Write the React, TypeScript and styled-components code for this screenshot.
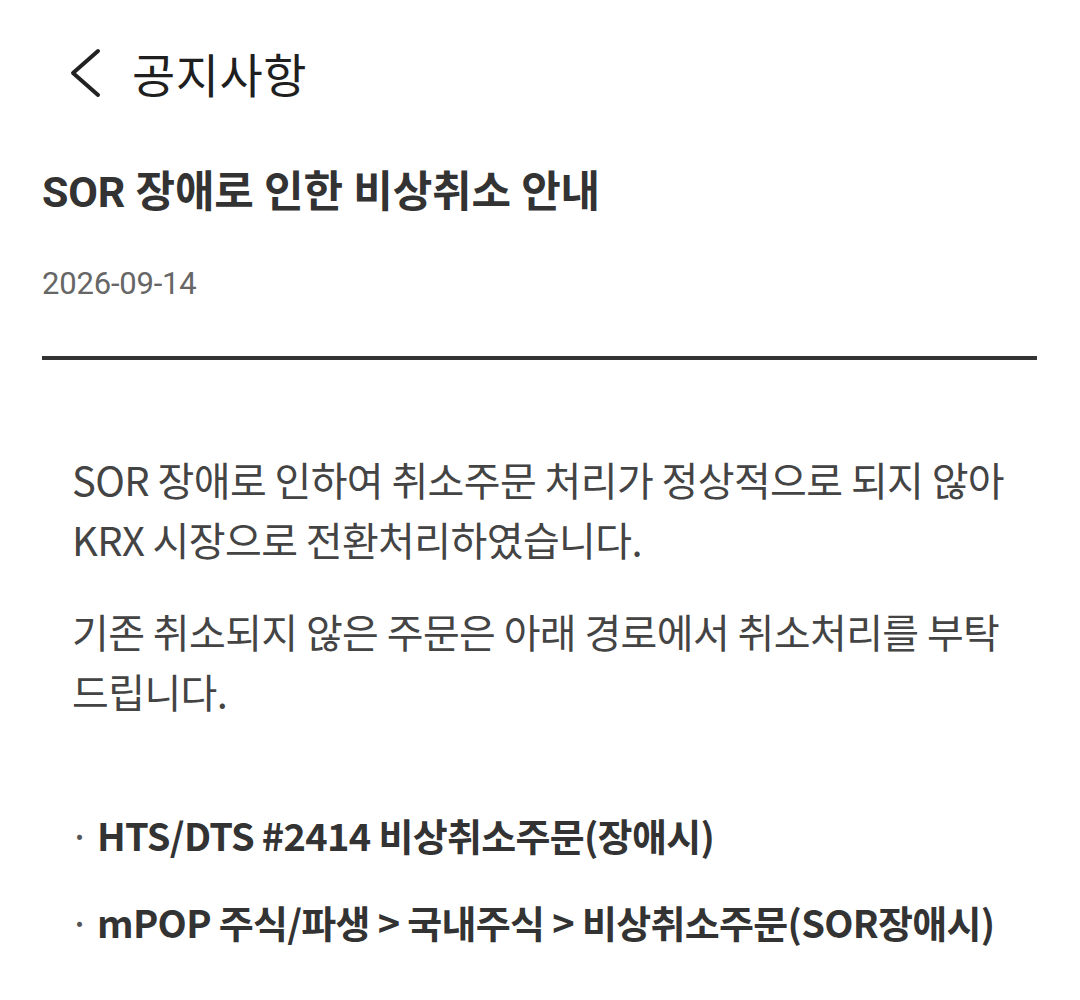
import React from 'react';
import styled, { createGlobalStyle } from 'styled-components';

const GlobalStyle = createGlobalStyle`
  html, body {
    margin: 0;
    padding: 0;
    background: #ffffff;
  }
  body {
    font-family: Roboto, "Noto Sans CJK KR", sans-serif;
  }
`;

const Page = styled.div`
  width: 1080px;
  min-height: 1000px;
  background: #ffffff;
`;

const Header = styled.header`
  display: flex;
  align-items: center;
  height: 146px;
  padding: 0 0 0 66px;
  box-sizing: border-box;
  gap: 28px;
`;

const BackButton = styled.button`
  display: flex;
  align-items: center;
  justify-content: center;
  width: 38px;
  height: 56px;
  padding: 0;
  border: none;
  background: transparent;
`;

const HeaderTitle = styled.h1`
  margin: 0;
  font-family: "Noto Sans CJK KR", sans-serif;
  font-size: 47px;
  font-weight: 400;
  color: #1f1f1f;
  letter-spacing: 0.5px;
  line-height: 60px;
`;

const Article = styled.article`
  padding: 0 43px 0 42px;
`;

const Title = styled.h2`
  margin: 16px 0 0;
  font-family: Roboto, "Noto Sans CJK KR", sans-serif;
  font-size: 43px;
  font-weight: 700;
  color: #333333;
  line-height: 60px;
  letter-spacing: -0.2px;
`;

const DateText = styled.div`
  margin-top: 42px;
  font-family: Roboto, "Noto Sans CJK KR", sans-serif;
  font-size: 31px;
  color: #666666;
  line-height: 40px;
  letter-spacing: -0.2px;
`;

const Divider = styled.hr`
  margin: 52px 0 0;
  border: none;
  height: 4px;
  background: #333333;
`;

const Body = styled.div`
  padding: 89px 0 0 30px;
  font-family: "Noto Sans CJK KR", sans-serif;
  color: #444444;
`;

const Paragraph = styled.p`
  margin: 0 0 32px;
  font-size: 40px;
  line-height: 60px;
  letter-spacing: -0.6px;
`;

const RouteList = styled.ul`
  list-style: none;
  margin: 70px 0 0;
  padding: 0;
`;

const RouteItem = styled.li`
  display: flex;
  align-items: baseline;
  font-size: 38px;
  font-weight: 700;
  color: #333333;
  line-height: 87px;
  letter-spacing: -0.7px;
`;

const Bullet = styled.span`
  width: 28px;
  margin-left: -3px;
  font-weight: 400;
  color: #555555;
`;

const ChevronLeft = () => (
  <svg width="34" height="50" viewBox="0 0 34 50" fill="none">
    <path
      d="M30 3 L5 25 L30 47"
      stroke="#222222"
      strokeWidth="4"
      strokeLinecap="round"
      strokeLinejoin="round"
    />
  </svg>
);

const routes = [
  'HTS/DTS #2414 비상취소주문(장애시)',
  'mPOP 주식/파생 > 국내주식 > 비상취소주문(SOR장애시)',
];

export default function App() {
  return (
    <Page>
      <GlobalStyle />
      <Header>
        <BackButton aria-label="뒤로">
          <ChevronLeft />
        </BackButton>
        <HeaderTitle>공지사항</HeaderTitle>
      </Header>
      <Article>
        <Title>SOR 장애로 인한 비상취소 안내</Title>
        <DateText>2026-09-14</DateText>
        <Divider />
        <Body>
          <Paragraph>
            SOR 장애로 인하여 취소주문 처리가 정상적으로 되지 않아
            <br />
            KRX 시장으로 전환처리하였습니다.
          </Paragraph>
          <Paragraph>
            기존 취소되지 않은 주문은 아래 경로에서 취소처리를 부탁
            <br />
            드립니다.
          </Paragraph>
          <RouteList>
            {routes.map((route) => (
              <RouteItem key={route}>
                <Bullet>·</Bullet>
                {route}
              </RouteItem>
            ))}
          </RouteList>
        </Body>
      </Article>
    </Page>
  );
}
